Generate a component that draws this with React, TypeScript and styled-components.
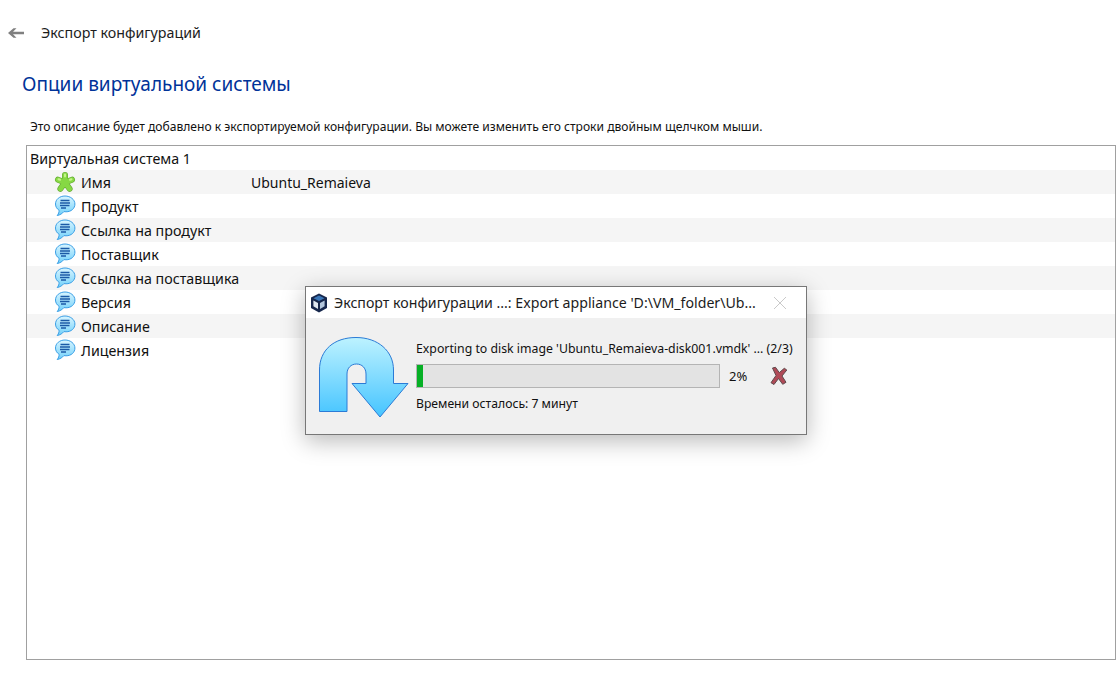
import React from 'react';
import styled, { createGlobalStyle } from 'styled-components';

const GlobalStyle = createGlobalStyle`
  html, body {
    margin: 0;
    padding: 0;
    background: #fff;
  }
  body {
    font-family: "Noto Sans", "Open Sans", sans-serif;
    color: #111;
  }
`;

const Page = styled.div`
  position: relative;
  width: 1117px;
  height: 677px;
  overflow: hidden;
  background: #fff;
`;

const Header = styled.div`
  display: flex;
  align-items: center;
  gap: 17px;
  height: 20px;
  padding: 23px 0 0 7px;
`;

const HeaderTitle = styled.span`
  font-size: 14.25px;
  line-height: 20px;
  color: #1c1c1c;
`;

const Heading = styled.h1`
  margin: 28px 0 0 22px;
  font-size: 19px;
  line-height: 26px;
  font-weight: 400;
  color: #003399;
`;

const Hint = styled.p`
  margin: 22px 0 0 30px;
  font-size: 12.08px;
  line-height: 16px;
  color: #111;
`;

const ListBox = styled.div`
  box-sizing: border-box;
  width: 1090px;
  height: 515px;
  margin: 10px 0 0 26px;
  border: 1px solid #a0a0a0;
`;

const Row = styled.div<{ $shaded?: boolean }>`
  display: flex;
  align-items: center;
  height: 24px;
  background: ${(p) => (p.$shaded ? '#f5f5f5' : '#fff')};
  font-size: 14.25px;
  color: #111;
`;

const GroupLabel = styled.span`
  padding-left: 3px;
`;

const RowIcon = styled.span`
  display: flex;
  width: 22px;
  margin-left: 27px;
`;

const RowName = styled.span`
  width: 170px;
  margin-left: 5px;
`;

const RowValue = styled.span`
  font-size: 14px;
`;

const Dialog = styled.div`
  position: absolute;
  left: 305px;
  top: 286px;
  box-sizing: border-box;
  width: 502px;
  height: 149px;
  border: 1px solid #777;
  background: #f0f0f0;
  box-shadow: 0 6px 22px rgba(0, 0, 0, 0.28);
`;

const TitleBar = styled.div`
  display: flex;
  align-items: center;
  height: 31px;
  padding-left: 4px;
  background: #fff;
`;

const TitleText = styled.span`
  margin-left: 6px;
  width: 430px;
  font-size: 14.17px;
  white-space: nowrap;
  color: #1c1c1c;
`;

const CloseButton = styled.span`
  display: flex;
  margin-left: 9px;
`;

const DialogBody = styled.div`
  display: flex;
  padding: 13px 0 0 6px;
`;

const Status = styled.div`
  display: flex;
  flex-direction: column;
  margin-left: 4px;
  padding-top: 10px;
  font-size: 12.2px;
  line-height: 16px;
  color: #111;
`;

const StatusLine = styled.span`
  font-size: 12.3px;
  white-space: nowrap;
`;

const ProgressRow = styled.div`
  display: flex;
  align-items: center;
  margin-top: 7px;
`;

const Track = styled.div`
  box-sizing: border-box;
  width: 304px;
  height: 24px;
  border: 1px solid #b4b4b4;
  background: #e3e3e3;
`;

const Fill = styled.div`
  height: 100%;
  background: #06b025;
`;

const Percent = styled.span`
  margin-left: 9px;
  width: 40px;
  font-size: 13px;
`;

const Remaining = styled.span`
  margin-top: 8px;
`;

const rows = [
  { name: 'Имя', value: 'Ubuntu_Remaieva', icon: 'star' },
  { name: 'Продукт' },
  { name: 'Ссылка на продукт' },
  { name: 'Поставщик' },
  { name: 'Ссылка на поставщика' },
  { name: 'Версия' },
  { name: 'Описание' },
  { name: 'Лицензия' },
];

const BackArrow = () => (
  <svg width="17" height="14" viewBox="0 0 17 14">
    <path d="M17 5.700H6L9.500 2.200H6.500L1 7l5.500 4.800h3L6 8.300h11z" fill="#808080" />
  </svg>
);

const lobes = 'M11 11.500V4M11 11.500l7-2.800M11 11.500l-7-2.800M11 11.500l4.600 6.300M11 11.500l-4.600 6.300';

const GreenStar = () => (
  <svg width="22" height="22" viewBox="0 0 22 22" strokeLinecap="round" fill="none">
    <path d={lobes} stroke="#64a934" strokeWidth="6" />
    <path d={lobes} stroke="#86d844" strokeWidth="4.800" />
    <path d="M11 3.500v2M4.500 8.200l1.500.6M17.500 8.200l-1.500.6" stroke="#c4f48a" strokeWidth="2" />
  </svg>
);

const SpeechBubble = () => (
  <svg width="22" height="22" viewBox="0 0 22 22">
    <defs>
      <linearGradient id="bubbleFill" x1="0" y1="0" x2="0" y2="1">
        <stop offset="0" stopColor="#d8f5ff" />
        <stop offset="1" stopColor="#70d0fa" />
      </linearGradient>
    </defs>
    <path
      d="M11 1C5.700 1 1.500 4.400 1.500 9c0 2.700 1.400 4.900 3.600 6.300.1 1.700-.6 3.700-1.900 5.200 2.700-.4 5.300-2.100 6.700-3.900.7.100 1.400.2 2.100.2 5.300 0 8.900-3.300 8.900-7.800S16.300 1 11 1z"
      fill="url(#bubbleFill)"
      stroke="#3a9fe6"
      strokeWidth="1"
    />
    <path d="M6.500 5.500h9M6 8h10M6 10.500h9.500M7 13h5" stroke="#1b5aa6" strokeWidth="1.500" />
  </svg>
);

const CubeLogo = () => (
  <svg width="18" height="20" viewBox="0 0 18 20">
    <path d="M9 .5l8 4v10.500l-8 4.500-8-4.500V4.500z" fill="#16274c" />
    <path d="M9 2.500l5.500 2.700L9 8 3.500 5.200z" fill="#3a76b8" />
    <path d="M3.400 7.500l4.600 2.400v6l-4.600-2.600z" fill="#dfe7f0" />
    <path d="M14.600 7.500L10 9.900v6l4.600-2.600z" fill="#b4c7dc" />
  </svg>
);

const CloseCross = () => (
  <svg width="14" height="14" viewBox="0 0 14 14">
    <path d="M1 1l12 12M13 1L1 13" stroke="#c9c9c9" strokeWidth="1" fill="none" />
  </svg>
);

const UTurnArrow = () => (
  <svg width="100" height="92" viewBox="0 0 100 92">
    <defs>
      <linearGradient id="arrowFill" x1="0" y1="0" x2="0" y2="1">
        <stop offset="0" stopColor="#bdf2ff" />
        <stop offset="1" stopColor="#45c4ff" />
      </linearGradient>
    </defs>
    <path
      d="M7.500 80.500V39C7.500 19 22 6.500 44 6.500S81.500 20 81.500 39v13.500H96L68 86 40 52.500h14V43c0-6-4-10-9.500-10S35 37 35 43v37.500z"
      fill="url(#arrowFill)"
      stroke="#2b7bd6"
      strokeWidth="1"
      strokeLinejoin="round"
    />
  </svg>
);

const CancelCross = () => (
  <svg width="20" height="20" viewBox="0 0 20 20">
    <path
      d="M3.500 2l3-.7 3.800 5.300 5-4.300 2.500 1.700-4.800 6 4 6.300-3.300 2L9.500 12.500 5 18.500l-3-1.800 5-7.200z"
      fill="#b04a57"
      stroke="#5e4a4c"
      strokeWidth="1"
      strokeLinejoin="round"
    />
  </svg>
);

export default function App() {
  return (
    <Page>
      <GlobalStyle />
      <Header>
        <BackArrow />
        <HeaderTitle>Экспорт конфигураций</HeaderTitle>
      </Header>
      <Heading>Опции виртуальной системы</Heading>
      <Hint>
        Это описание будет добавлено к экспортируемой конфигурации. Вы можете изменить его строки двойным щелчком мыши.
      </Hint>
      <ListBox>
        <Row>
          <GroupLabel>Виртуальная система 1</GroupLabel>
        </Row>
        {rows.map((row, i) => (
          <Row key={row.name} $shaded={i % 2 === 0}>
            <RowIcon>{row.icon === 'star' ? <GreenStar /> : <SpeechBubble />}</RowIcon>
            <RowName>{row.name}</RowName>
            {row.value && <RowValue>{row.value}</RowValue>}
          </Row>
        ))}
      </ListBox>
      <Dialog>
        <TitleBar>
          <CubeLogo />
          <TitleText>Экспорт конфигурации ...: Export appliance 'D:\VM_folder\Ub...</TitleText>
          <CloseButton>
            <CloseCross />
          </CloseButton>
        </TitleBar>
        <DialogBody>
          <UTurnArrow />
          <Status>
            <StatusLine>Exporting to disk image 'Ubuntu_Remaieva-disk001.vmdk' ... (2/3)</StatusLine>
            <ProgressRow>
              <Track>
                <Fill style={{ width: '2%' }} />
              </Track>
              <Percent>2%</Percent>
              <CancelCross />
            </ProgressRow>
            <Remaining>Времени осталось: 7 минут</Remaining>
          </Status>
        </DialogBody>
      </Dialog>
    </Page>
  );
}
